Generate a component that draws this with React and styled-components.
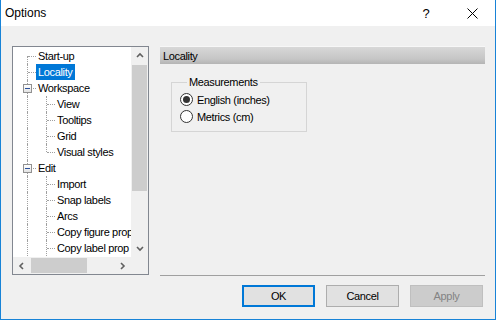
import React from "react";
import styled, { createGlobalStyle, css } from "styled-components";

const GlobalStyle = createGlobalStyle`
  html, body {
    margin: 0;
    padding: 0;
    background: #ffffff;
  }
  * {
    box-sizing: border-box;
  }
`;

const Window = styled.div`
  width: 496px;
  height: 320px;
  display: flex;
  flex-direction: column;
  border: 1px solid #1883d7;
  border-top: none;
  background: #f0f0f0;
  font-family: "Liberation Sans", Arial, sans-serif;
  font-size: 11px;
  letter-spacing: -0.35px;
  color: #000;
`;

const TitleBar = styled.div`
  height: 26px;
  flex: none;
  display: flex;
  align-items: center;
  background: #ffffff;
  padding-left: 4px;
  letter-spacing: 0;
`;

const Caption = styled.div`
  flex: 1;
  font-size: 12px;
  line-height: 26px;
`;

const CaptionButton = styled.div`
  width: 46px;
  height: 26px;
  display: flex;
  align-items: center;
  justify-content: center;
  font-size: 13px;
`;

const Body = styled.div`
  flex: 1;
  display: flex;
  flex-direction: column;
  padding: 20px 10px 0 11px;
`;

const Main = styled.div`
  display: flex;
  align-items: flex-start;
  gap: 11px;
`;

/* ---------- tree ---------- */

const Tree = styled.div`
  width: 137px;
  height: 229px;
  border: 1px solid #828790;
  background: #ffffff;
  display: grid;
  grid-template-columns: 118px 17px;
  grid-template-rows: 210px 17px;
`;

const TreeBody = styled.div`
  overflow: hidden;
  padding: 1px 0 0 4px;
`;

const Row = styled.div`
  height: 16px;
  display: flex;
  align-items: center;
  white-space: nowrap;
`;

const lineColor = "#a0a0a0";

const Cell = styled.div`
  position: relative;
  width: 19px;
  height: 16px;
  flex: none;

  ${({ $kind }) =>
    $kind !== "blank" &&
    css`
      &::before {
        content: "";
        position: absolute;
        left: 10px;
        top: ${$kind === "first" ? "8px" : "0"};
        bottom: ${$kind === "last" ? "8px" : "0"};
        border-left: 1px dotted ${lineColor};
      }
    `}

  ${({ $kind }) =>
    $kind !== "pipe" &&
    $kind !== "blank" &&
    css`
      &::after {
        content: "";
        position: absolute;
        left: 11px;
        width: 8px;
        top: 8px;
        border-top: 1px dotted ${lineColor};
      }
    `}
`;

const ExpandBox = styled.span`
  position: absolute;
  z-index: 1;
  left: 6px;
  top: 4px;
  width: 9px;
  height: 9px;
  border: 1px solid #919191;
  background: linear-gradient(#ffffff, #e3e3e3);
  display: flex;
  align-items: center;
  justify-content: center;

  &::before {
    content: "";
    width: 5px;
    height: 1px;
    background: #2a4f9a;
  }
`;

const Label = styled.span`
  height: 16px;
  line-height: 16px;
  padding: 0 2px;
  background: ${({ $selected }) => ($selected ? "#0078d7" : "transparent")};
  color: ${({ $selected }) => ($selected ? "#ffffff" : "#000000")};
`;

const VScroll = styled.div`
  background: #f0f0f0;
  display: flex;
  flex-direction: column;
`;

const HScroll = styled.div`
  background: #f0f0f0;
  display: flex;
`;

const Corner = styled.div`
  background: #f0f0f0;
`;

const Arrow = styled.div`
  width: 17px;
  height: 17px;
  flex: none;
  display: flex;
  align-items: center;
  justify-content: center;
`;

const Track = styled.div`
  flex: 1;
  display: flex;
  flex-direction: ${({ $vertical }) => ($vertical ? "column" : "row")};
`;

const Thumb = styled.div`
  background: #cdcdcd;
  ${({ $vertical }) =>
    $vertical
      ? css`
          margin: 1px 1px 0 1px;
          height: 126px;
        `
      : css`
          margin: 1px 0 1px 1px;
          width: 56px;
        `}
`;

const Chevron = ({ dir }) => {
  const pts = {
    up: "1,5 4,2 7,5",
    down: "1,2 4,5 7,2",
    left: "5,1 2,4 5,7",
    right: "2,1 5,4 2,7",
  }[dir];
  return (
    <svg width="8" height="8" viewBox="0 0 8 8">
      <polyline points={pts} fill="none" stroke="#606060" strokeWidth="1.6" />
    </svg>
  );
};

const treeRows = [
  { text: "Start-up", cells: ["first"] },
  { text: "Locality", cells: ["tee"], selected: true },
  { text: "Workspace", cells: ["tee"], box: true },
  { text: "View", cells: ["pipe", "tee"] },
  { text: "Tooltips", cells: ["pipe", "tee"] },
  { text: "Grid", cells: ["pipe", "tee"] },
  { text: "Visual styles", cells: ["pipe", "last"] },
  { text: "Edit", cells: ["tee"], box: true },
  { text: "Import", cells: ["pipe", "tee"] },
  { text: "Snap labels", cells: ["pipe", "tee"] },
  { text: "Arcs", cells: ["pipe", "tee"] },
  { text: "Copy figure prop", cells: ["pipe", "tee"] },
  { text: "Copy label prop", cells: ["pipe", "tee"] },
];

/* ---------- right panel ---------- */

const Panel = styled.div`
  width: 325px;
  height: 230px;
  border-bottom: 1px solid #a0a0a0;
  display: flex;
  flex-direction: column;
`;

const PanelHeader = styled.div`
  height: 18px;
  line-height: 18px;
  padding-left: 3px;
  border-top: 1px solid #f7f7f7;
  background: linear-gradient(#d8d8d8, #c6c6c6 70%, #b4b4b4);
`;

const GroupBox = styled.fieldset`
  margin: 12px 0 0 11px;
  width: 136px;
  height: 56px;
  border: 1px solid #d5d5d5;
  padding: 2px 0 0 8px;
  min-width: 0;
`;

const Legend = styled.legend`
  margin-left: 7px;
  padding: 0 2px;
  line-height: 13px;
`;

const RadioRow = styled.label`
  height: 17px;
  display: flex;
  align-items: center;
  gap: 4px;
`;

const RadioCircle = styled.span`
  width: 13px;
  height: 13px;
  border-radius: 50%;
  border: 1px solid #333333;
  background: #ffffff;
  display: flex;
  align-items: center;
  justify-content: center;

  &::before {
    content: "";
    width: 7px;
    height: 7px;
    border-radius: 50%;
    background: ${({ $checked }) => ($checked ? "#333333" : "transparent")};
  }
`;

/* ---------- footer ---------- */

const Footer = styled.div`
  display: flex;
  justify-content: flex-end;
  gap: 11px;
  margin: 9px 2px 0 0;
`;

const Button = styled.div`
  width: 73px;
  height: 22px;
  display: flex;
  align-items: center;
  justify-content: center;
  background: #e1e1e1;
  border: 1px solid #adadad;

  ${({ $variant }) =>
    $variant === "default" &&
    css`
      border: 2px solid #0078d7;
    `}

  ${({ $variant }) =>
    $variant === "disabled" &&
    css`
      background: #cccccc;
      border-color: #bfbfbf;
      color: #838383;
    `}
`;

export default function App() {
  return (
    <>
      <GlobalStyle />
      <Window>
        <TitleBar>
          <Caption>Options</Caption>
          <CaptionButton>?</CaptionButton>
          <CaptionButton>
            <svg width="11" height="11" viewBox="0 0 11 11">
              <path d="M0.5 0.5 L10.5 10.5 M10.5 0.5 L0.5 10.5" stroke="#000" strokeWidth="1" />
            </svg>
          </CaptionButton>
        </TitleBar>
        <Body>
          <Main>
            <Tree>
              <TreeBody>
                {treeRows.map((row) => (
                  <Row key={row.text}>
                    {row.cells.map((kind, i) => (
                      <Cell key={i} $kind={kind}>
                        {row.box && i === row.cells.length - 1 && <ExpandBox />}
                      </Cell>
                    ))}
                    <Label $selected={row.selected}>{row.text}</Label>
                  </Row>
                ))}
              </TreeBody>
              <VScroll>
                <Arrow>
                  <Chevron dir="up" />
                </Arrow>
                <Track $vertical>
                  <Thumb $vertical />
                </Track>
                <Arrow>
                  <Chevron dir="down" />
                </Arrow>
              </VScroll>
              <HScroll>
                <Arrow>
                  <Chevron dir="left" />
                </Arrow>
                <Track>
                  <Thumb />
                </Track>
                <Arrow>
                  <Chevron dir="right" />
                </Arrow>
              </HScroll>
              <Corner />
            </Tree>
            <Panel>
              <PanelHeader>Locality</PanelHeader>
              <GroupBox>
                <Legend>Measurements</Legend>
                <RadioRow>
                  <RadioCircle $checked />
                  English (inches)
                </RadioRow>
                <RadioRow>
                  <RadioCircle />
                  Metrics (cm)
                </RadioRow>
              </GroupBox>
            </Panel>
          </Main>
          <Footer>
            <Button $variant="default">OK</Button>
            <Button>Cancel</Button>
            <Button $variant="disabled">Apply</Button>
          </Footer>
        </Body>
      </Window>
    </>
  );
}
